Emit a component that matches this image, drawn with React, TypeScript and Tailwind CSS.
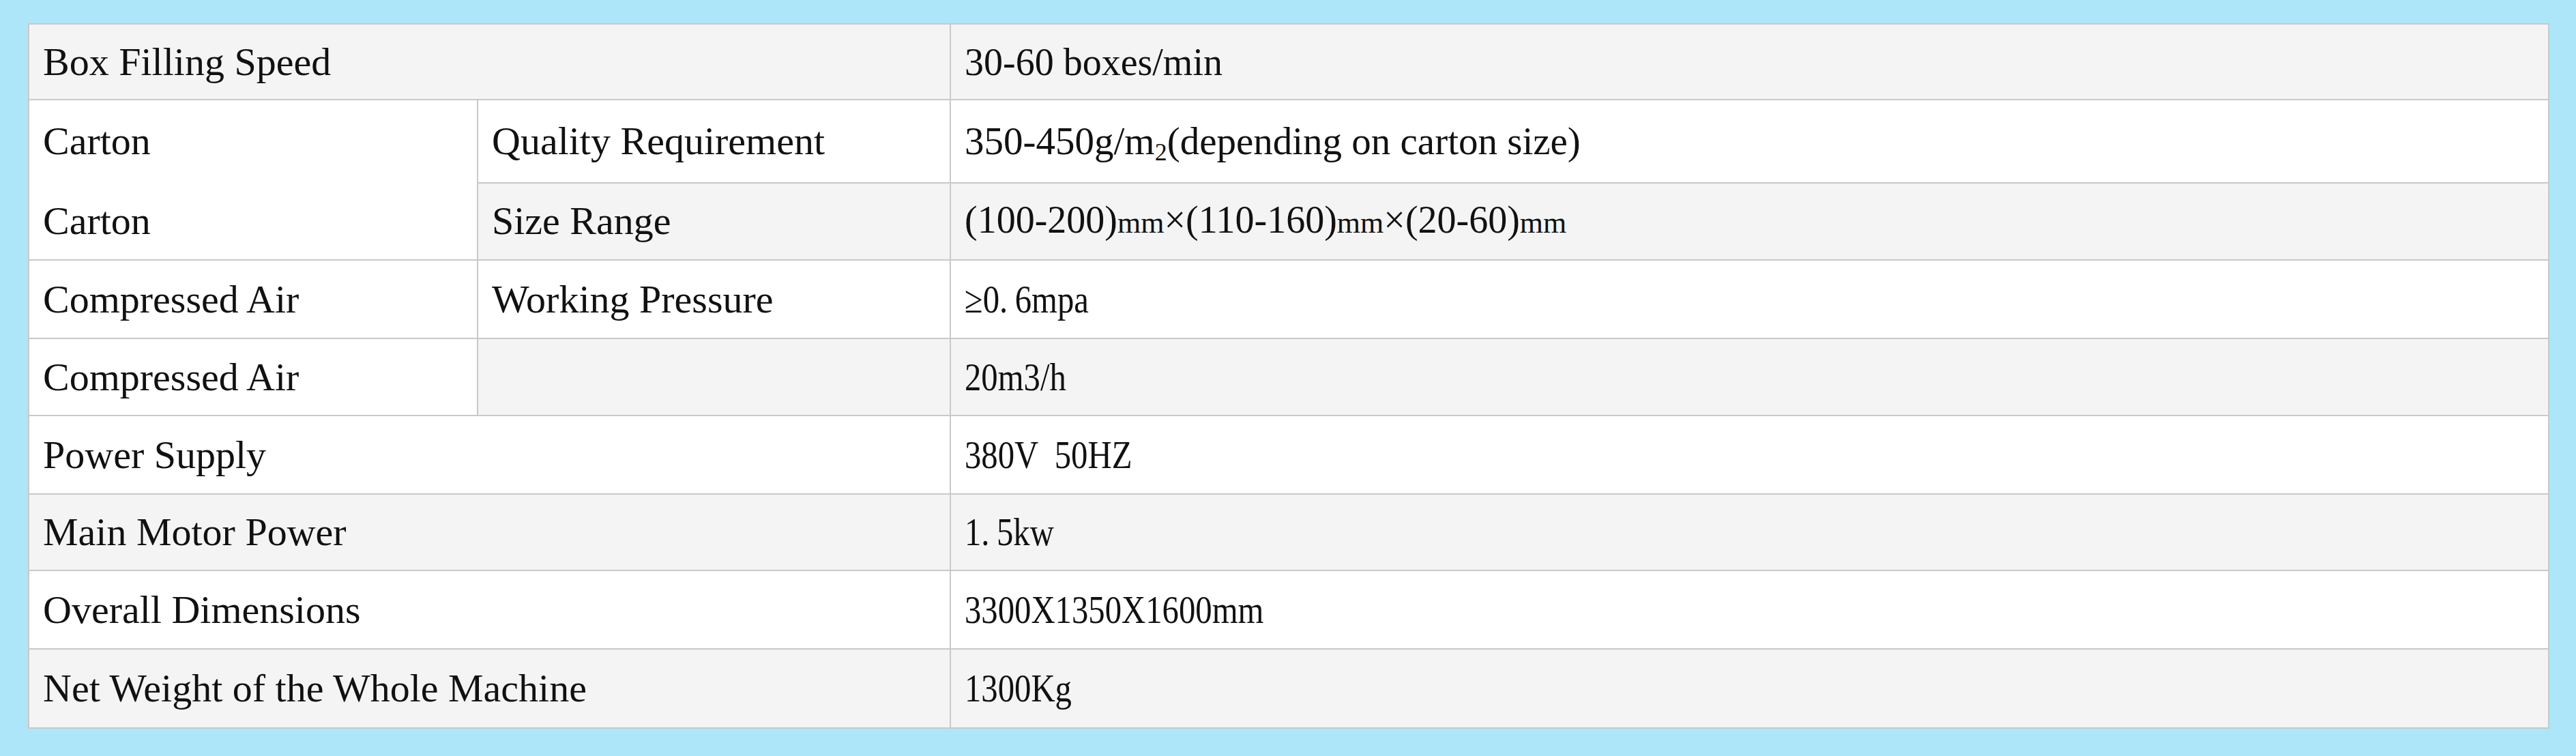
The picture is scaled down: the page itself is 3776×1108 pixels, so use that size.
const cell = "border-2 border-[#c9c9c9] px-[20px] align-middle"
const gray = "bg-[#f4f4f4]"
const white = "bg-white"

// values typed in a SimSun-like face: narrow digits, so squeeze them a bit
const Narrow = ({ children }: { children: React.ReactNode }) => (
  <span className="inline-block origin-left scale-x-[0.87] whitespace-nowrap [word-spacing:14px]">{children}</span>
)

// half-width period of that face sits in a wide box
const Dot = () => <span className="inline-block w-[26px]">.</span>

export default function App() {
  return (
    <div className="min-h-screen w-full bg-[#ade6f8] pl-[41px] pr-[39px] pt-[34px] pb-[43px] font-['Liberation_Serif','Noto_Sans_CJK_SC',serif] text-[#111]">
      <table className="w-full table-fixed border-collapse border-2 border-[#bcc6cc] text-[58px] leading-[66px]">
        <colgroup>
          <col className="w-[658px]" />
          <col className="w-[693px]" />
          <col />
        </colgroup>
        <tbody>
          <tr className="h-[111px]">
            <td colSpan={2} className={`${cell} ${gray}`}>Box Filling Speed</td>
            <td className={`${cell} ${gray} text-[56px]`}>30-60 boxes/min</td>
          </tr>
          <tr className="h-[121px]">
            <td rowSpan={2} className={`border-2 border-[#c9c9c9] p-0 align-top ${white}`}>
              <div className="flex h-[120px] items-center px-[20px]">Carton</div>
              <div className="flex h-[113px] items-center px-[20px]">Carton</div>
            </td>
            <td className={`${cell} ${white}`}>Quality Requirement</td>
            <td className={`${cell} ${white} text-[57px]`}>
              350-450g/m<sub className="text-[36px]">2</sub>(depending on carton size)
            </td>
          </tr>
          <tr className="h-[113px]">
            <td className={`${cell} ${gray}`}>Size Range</td>
            <td className={`${cell} ${gray} text-[56px]`}>
              (100-200)<span className="text-[44px]">mm</span>×(110-160)<span className="text-[44px]">mm</span>×(20-60)<span className="text-[44px]">mm</span>
            </td>
          </tr>
          <tr className="h-[115px]">
            <td className={`${cell} ${white}`}>Compressed Air</td>
            <td className={`${cell} ${white}`}>Working Pressure</td>
            <td className={`${cell} ${white} text-[56px]`}><Narrow>≥0<Dot />6mpa</Narrow></td>
          </tr>
          <tr className="h-[113px]">
            <td className={`${cell} ${white}`}>Compressed Air</td>
            <td className={`${cell} ${gray}`}></td>
            <td className={`${cell} ${gray} text-[56px]`}><Narrow>20m3/h</Narrow></td>
          </tr>
          <tr className="h-[115px]">
            <td colSpan={2} className={`${cell} ${white}`}>Power Supply</td>
            <td className={`${cell} ${white} text-[56px]`}><Narrow>380V 50HZ</Narrow></td>
          </tr>
          <tr className="h-[112px]">
            <td colSpan={2} className={`${cell} ${gray}`}>Main Motor Power</td>
            <td className={`${cell} ${gray} text-[56px]`}><Narrow>1<Dot />5kw</Narrow></td>
          </tr>
          <tr className="h-[115px]">
            <td colSpan={2} className={`${cell} ${white}`}>Overall Dimensions</td>
            <td className={`${cell} ${white} text-[56px]`}><Narrow>3300X1350X1600mm</Narrow></td>
          </tr>
          <tr className="h-[116px]">
            <td colSpan={2} className={`${cell} ${gray}`}>Net Weight of the Whole Machine</td>
            <td className={`${cell} ${gray} text-[56px]`}><Narrow>1300Kg</Narrow></td>
          </tr>
        </tbody>
      </table>
    </div>
  )
}
